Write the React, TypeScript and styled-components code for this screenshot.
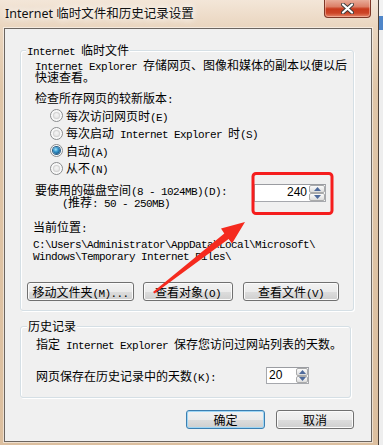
import React from 'react';
import styled, { createGlobalStyle } from 'styled-components';

const GlobalStyle = createGlobalStyle`
  html, body {
    margin: 0;
    padding: 0;
    background: #ececec;
  }
  body {
    font-family: "Noto Sans CJK SC", "Noto Sans", sans-serif;
    font-size: 12px;
    color: #000;
  }
  * {
    box-sizing: border-box;
  }
`;

// SimSun draws ascii at half the width of a CJK glyph
const sim = (text: string) =>
  text.split(/([\x20-\x7e]+)/).map((part, i) =>
    /^[\x20-\x7e]+$/.test(part) ? <Latin key={i}>{part}</Latin> : part
  );

const Radio = ({ checked, label }: { checked?: boolean; label: string }) => (
  <RadioRow>
    <RadioDot $checked={checked} />
    <span>{sim(label)}</span>
  </RadioRow>
);

const Spinner = ({ value, $w, $h, $spinW, $align }: { value: string; $w: number; $h: number; $spinW: number; $align: 'left' | 'right' }) => (
  <SpinBox $w={$w} $h={$h}>
    <SpinValue $align={$align}>{value}</SpinValue>
    <SpinCol $w={$spinW}>
      <SpinBtn>
        <svg width="7" height="4" viewBox="0 0 7 4"><path d="M3.5 0 L7 4 L0 4 Z" fill="#4e6a9c" /></svg>
      </SpinBtn>
      <SpinBtn>
        <svg width="7" height="4" viewBox="0 0 7 4"><path d="M0 0 L7 0 L3.5 4 Z" fill="#4e6a9c" /></svg>
      </SpinBtn>
    </SpinCol>
  </SpinBox>
);

const App = () => {
  return (
    <Screen>
      <GlobalStyle />
      <Window>
        <TitleBar>
          <Title>Internet 临时文件和历史记录设置</Title>
          <CloseButton>
            <svg width="13" height="11" viewBox="0 0 13 11">
              <path d="M2 1.5 L11 9.5 M11 1.5 L2 9.5" stroke="#3b3b3b" strokeWidth="4" strokeLinecap="round" />
              <path d="M2 1.5 L11 9.5 M11 1.5 L2 9.5" stroke="#ffffff" strokeWidth="2.2" strokeLinecap="round" />
            </svg>
          </CloseButton>
        </TitleBar>
        <Client>
          <Group $top={21} $w={334} $pb={9}>
            <Legend $ml={5}>{sim('Internet 临时文件')}</Legend>
            <Para $mt={3} $ml={14}>
              {sim('Internet Explorer 存储网页、图像和媒体的副本以便以后')}
              <br />
              快速查看。
            </Para>
            <Para $mt={9} $ml={14}>{sim('检查所存网页的较新版本:')}</Para>
            <RadioList>
              <Radio label="每次访问网页时(E)" />
              <Radio label="每次启动 Internet Explorer 时(S)" />
              <Radio checked label="自动(A)" />
              <Radio label="从不(N)" />
            </RadioList>
            <DiskRow>
              <Para $mt={0} $ml={14}>
                {sim('要使用的磁盘空间(8 - 1024MB)(D):')}
                <Indent>{sim('(推荐: 50 - 250MB)')}</Indent>
              </Para>
              <Spinner value="240" $w={72} $h={18} $spinW={16} $align="right" />
            </DiskRow>
            <Para $mt={13} $ml={12}>{sim('当前位置:')}</Para>
            <Para $mt={4} $ml={12}>
              {sim('C:\\Users\\Administrator\\AppData\\Local\\Microsoft\\')}
              <br />
              {sim('Windows\\Temporary Internet Files\\')}
            </Para>
            <ButtonRow>
              <Button $w={107}>{sim('移动文件夹(M)...')}</Button>
              <Button $w={90} $ml={9}>{sim('查看对象(O)')}</Button>
              <Button $w={96} $ml={10}>{sim('查看文件(V)')}</Button>
            </ButtonRow>
          </Group>

          <Group $top={15} $w={331} $pb={13}>
            <Legend $ml={6}>历史记录</Legend>
            <Para $mt={6} $ml={15}>{sim('指定 Internet Explorer 保存您访问过网站列表的天数。')}</Para>
            <DaysRow>
              <DaysLabel>{sim('网页保存在历史记录中的天数(K):')}</DaysLabel>
              <Spinner value="20" $w={43} $h={17} $spinW={12} $align="left" />
            </DaysRow>
          </Group>

          <Footer>
            <Button $w={79} $primary>确定</Button>
            <Button $w={78} $ml={11}>取消</Button>
          </Footer>
        </Client>
      </Window>
      <Backdrop />
      <Annotation width="383" height="445" viewBox="0 0 383 445">
        <rect x="253" y="173.5" width="79" height="40" rx="3" fill="none" stroke="#f51d1d" strokeWidth="3" />
        <polygon
          points="153,292 224.3,233.4 221,228.6 245,222 232,243.6 228.6,239 154.5,293.5"
          fill="#f52a1e"
        />
      </Annotation>
    </Screen>
  );
};

export default App;

const Screen = styled.div`
  width: 383px;
  height: 445px;
  overflow: hidden;
  position: relative;
  display: flex;
`;

const Window = styled.div`
  width: 379px;
  height: 445px;
  flex: none;
  padding: 0 6px 0 4px;
  border-right: 1px solid #4c4038;
  background: linear-gradient(to bottom, #f3e6d8 0px, #ead6c0 26px, #e0c6a8 90px, #dcbf9f 100%);
  display: flex;
  flex-direction: column;
`;

const Backdrop = styled.div`
  flex: 1;
  background: linear-gradient(to bottom, #f2f2f2 0, #f2f2f2 16px, #4f86c9 16px, #4f86c9 30px, #eeeeee 30px);
`;

const TitleBar = styled.div`
  height: 28px;
  flex: none;
  display: flex;
  align-items: flex-start;
`;

const Title = styled.div`
  padding: 6px 0 0 1px;
  line-height: 16px;
  font-size: 12.5px;
  font-family: "Noto Sans", "Noto Sans CJK SC", sans-serif;
  color: #111;
  text-shadow: 0 0 6px #fff, 0 0 10px #fff;
  white-space: nowrap;
`;

const CloseButton = styled.div`
  margin: -1px 1px 0 auto;
  width: 47px;
  height: 19px;
  border: 1px solid #7e3626;
  border-top: none;
  border-radius: 0 0 4px 4px;
  background: linear-gradient(to bottom, #eab2a0 0%, #dc8068 42%, #c83a1d 55%, #cc4426 78%, #e5866a 100%);
  box-shadow: inset 0 0 0 1px rgba(255, 215, 200, 0.45);
  display: flex;
  align-items: center;
  justify-content: center;
  padding-top: 1px;
`;

const Client = styled.div`
  height: 414px;
  flex: none;
  background: #f0f0f0;
  border: 1px solid #6b6560;
  box-shadow: 0 0 0 1px rgba(255, 255, 255, 0.5);
  display: flex;
  flex-direction: column;
  align-items: flex-start;
`;

const Group = styled.div<{ $top: number; $w: number; $pb: number }>`
  margin: ${({ $top }) => $top}px 0 0 15px;
  width: ${({ $w }) => $w}px;
  flex: none;
  border: 1px solid #d5dfe5;
  border-radius: 3px;
  box-shadow: inset 1px 1px 0 #fff, 1px 1px 0 #fff;
  padding-bottom: ${({ $pb }) => $pb}px;
  display: flex;
  flex-direction: column;
  align-items: flex-start;
`;

const Legend = styled.div<{ $ml: number }>`
  margin: -7px 0 0 ${({ $ml }) => $ml}px;
  padding: 0 1px;
  height: 12px;
  background: #f0f0f0;
  line-height: 12px;
  white-space: nowrap;
`;

const Latin = styled.span`
  font-family: "Liberation Mono", "DejaVu Sans Mono", monospace;
  font-size: 11px;
  letter-spacing: -0.6px;
  line-height: 0;
`;

const Para = styled.div<{ $mt: number; $ml: number }>`
  margin: ${({ $mt }) => $mt}px 0 0 ${({ $ml }) => $ml}px;
  line-height: 12px;
  white-space: nowrap;
`;

const Indent = styled.div`
  padding-left: 27px;
  height: 12px;
`;

const RadioList = styled.div`
  margin: 3px 0 0 29px;
  display: grid;
  grid-auto-rows: 17.5px;
`;

const RadioRow = styled.div`
  display: flex;
  align-items: center;
  gap: 3px;
  line-height: 12px;
  white-space: nowrap;
`;

const RadioDot = styled.span<{ $checked?: boolean }>`
  width: 13px;
  height: 13px;
  border-radius: 50%;
  border: 1px solid #8a8c8e;
  background: radial-gradient(circle at 50% 50%, #e6e6e6 0, #f6f6f6 60%, #ffffff 100%);
  box-shadow: inset 0 0 0 1px #fbfbfb;
  display: flex;
  align-items: center;
  justify-content: center;

  &::after {
    content: '';
    width: 7px;
    height: 7px;
    border-radius: 50%;
    background: ${({ $checked }) =>
      $checked
        ? 'radial-gradient(circle at 40% 35%, #a9e6fb 0, #3a9bd0 35%, #155a8c 75%, #0e3f6a 100%)'
        : 'radial-gradient(circle at 50% 40%, #f5f5f5 0, #dcdcdc 100%)'};
    box-shadow: ${({ $checked }) => ($checked ? '0 0 0 1px #2c5f86' : 'inset 0 0 0 1px #d4d4d4')};
  }
`;

const DiskRow = styled.div`
  margin-top: 7px;
  width: 100%;
  display: flex;
  align-items: flex-start;
  justify-content: space-between;
  padding-right: 27px;
`;

const SpinBox = styled.div<{ $w: number; $h: number }>`
  width: ${({ $w }) => $w}px;
  height: ${({ $h }) => $h}px;
  border: 1px solid #a6a8ad;
  border-top-color: #9a9ca1;
  background: #fff;
  display: flex;
  align-items: stretch;
`;

const SpinValue = styled.div<{ $align: 'left' | 'right' }>`
  flex: 1;
  font-family: "Liberation Sans", Arial, sans-serif;
  font-size: 12px;
  line-height: 15px;
  text-align: ${({ $align }) => $align};
  padding: 0 2px;
`;

const SpinCol = styled.div<{ $w: number }>`
  width: ${({ $w }) => $w}px;
  display: flex;
  flex-direction: column;
`;

const SpinBtn = styled.div`
  flex: 1;
  border: 1px solid #a9aaab;
  border-radius: 2px;
  background: linear-gradient(to bottom, #fbfbfb 0%, #ececec 50%, #dcdcdc 100%);
  display: flex;
  align-items: center;
  justify-content: center;
`;

const ButtonRow = styled.div`
  margin: 21px 0 0 6px;
  display: flex;
`;

const Button = styled.button<{ $w: number; $ml?: number; $primary?: boolean }>`
  width: ${({ $w }) => $w}px;
  height: 19px;
  margin-left: ${({ $ml }) => $ml || 0}px;
  padding: 0;
  font-family: "Noto Sans CJK SC", sans-serif;
  font-size: 12px;
  line-height: 12px;
  color: #000;
  border: 1px solid ${({ $primary }) => ($primary ? '#3c7fb1' : '#707070')};
  border-radius: 3px;
  background: linear-gradient(to bottom, #f2f2f2 0%, #ebebeb 50%, #dddddd 51%, #cfcfcf 100%);
  box-shadow: inset 0 0 0 1px ${({ $primary }) => ($primary ? '#9ed6f5' : '#fbfbfb')};
  white-space: nowrap;
`;

const DaysRow = styled.div`
  margin: 17px 0 0 15px;
  display: flex;
  align-items: center;
`;

const DaysLabel = styled.div`
  width: 230px;
  line-height: 12px;
  white-space: nowrap;
`;

const Footer = styled.div`
  margin-top: 12px;
  width: 100%;
  display: flex;
  justify-content: flex-end;
  padding-right: 17px;
`;

const Annotation = styled.svg`
  position: absolute;
  left: 0;
  top: 0;
  pointer-events: none;
`;
